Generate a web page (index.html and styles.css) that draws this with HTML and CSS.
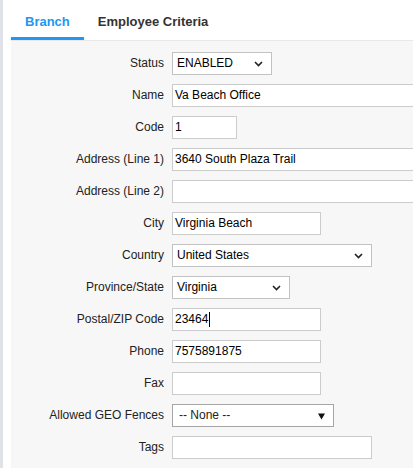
FILE: index.html
```html
<!DOCTYPE html>
<html lang="en">
<head>
<meta charset="utf-8">
<title>Branch</title>
<link rel="stylesheet" href="styles.css">
</head>
<body>
<div class="page">
  <div class="tabs">
    <div class="tab active">Branch</div>
    <div class="tab">Employee Criteria</div>
  </div>
  <div class="form">
    <div class="label">Status</div>
    <div class="control"><div class="select w100"><span>ENABLED</span><svg class="chev" width="9" height="6" viewBox="0 0 9 6"><polyline points="1,1 4.5,4.5 8,1" fill="none" stroke="#222" stroke-width="1.6"/></svg></div></div>

    <div class="label">Name</div>
    <div class="control"><div class="field wide">Va Beach Office</div></div>

    <div class="label">Code</div>
    <div class="control"><div class="field w65">1</div></div>

    <div class="label">Address (Line 1)</div>
    <div class="control"><div class="field wide">3640 South Plaza Trail</div></div>

    <div class="label">Address (Line 2)</div>
    <div class="control"><div class="field wide"></div></div>

    <div class="label">City</div>
    <div class="control"><div class="field w149">Virginia Beach</div></div>

    <div class="label">Country</div>
    <div class="control"><div class="select w200"><span>United States</span><svg class="chev" width="9" height="6" viewBox="0 0 9 6"><polyline points="1,1 4.5,4.5 8,1" fill="none" stroke="#222" stroke-width="1.6"/></svg></div></div>

    <div class="label">Province/State</div>
    <div class="control"><div class="select w118"><span>Virginia</span><svg class="chev" width="9" height="6" viewBox="0 0 9 6"><polyline points="1,1 4.5,4.5 8,1" fill="none" stroke="#222" stroke-width="1.6"/></svg></div></div>

    <div class="label">Postal/ZIP Code</div>
    <div class="control"><div class="field w149">23464<span class="caret"></span></div></div>

    <div class="label">Phone</div>
    <div class="control"><div class="field w149">7575891875</div></div>

    <div class="label">Fax</div>
    <div class="control"><div class="field w149"></div></div>

    <div class="label">Allowed GEO Fences</div>
    <div class="control"><div class="select geo"><span>-- None --</span><svg class="tri" width="7" height="7" viewBox="0 0 7 7"><polygon points="0,0.5 7,0.5 3.5,6.5" fill="#111"/></svg></div></div>

    <div class="label">Tags</div>
    <div class="control"><div class="field w200"></div></div>
  </div>
</div>
</body>
</html>
```

FILE: styles.css
```css
html, body {
  margin: 0;
  padding: 0;
  background: #ffffff;
}

body {
  font-family: "Liberation Sans", Arial, sans-serif;
  color: #222;
  overflow: hidden;
}

.page {
  border-left: 3px solid #dfe2e6;
  padding-left: 8px;
  min-height: 468px;
  box-sizing: border-box;
  display: flex;
  flex-direction: column;
}

.tabs {
  display: flex;
  height: 41px;
  box-sizing: border-box;
  border-bottom: 1px solid #e8e8e8;
}

.tab {
  height: 40px;
  box-sizing: border-box;
  padding: 14px 14px 0;
  font-size: 13px;
  line-height: 15px;
  font-weight: bold;
  color: #333;
  border-bottom: 3px solid transparent;
}

.tab.active {
  color: #2196f3;
  border-bottom-color: #2196f3;
}

.form {
  flex: 1;
  background: #f7f7f7;
  display: grid;
  grid-template-columns: 153px 1fr;
  grid-auto-rows: 23px;
  column-gap: 8px;
  row-gap: 9px;
  padding-top: 11px;
  align-content: start;
}

.label {
  text-align: right;
  font-size: 12px;
  line-height: 23px;
  color: #222;
  white-space: nowrap;
}

.control {
  display: flex;
  min-width: 0;
}

.field,
.select {
  height: 23px;
  box-sizing: border-box;
  border: 1px solid #cccccc;
  background: #ffffff;
  font-size: 12px;
  line-height: 21px;
  color: #000;
  flex-shrink: 0;
}

.field {
  padding: 0 2px;
  display: flex;
  align-items: center;
}

.select {
  display: flex;
  align-items: center;
  justify-content: space-between;
  padding: 0 8px 0 4px;
  border-color: #c2c2c2;
}

.chev {
  display: block;
  margin-top: 1px;
}

.select.geo {
  width: 162px;
  border-color: #a6a6a6;
  padding: 0 8px 0 6px;
  color: #222;
}

.tri {
  display: block;
  margin-top: 1px;
}

.wide { width: 260px; }
.w65 { width: 65px; }
.w100 { width: 100px; }
.w118 { width: 118px; }
.w149 { width: 149px; }
.w200 { width: 200px; }

.caret {
  display: inline-block;
  width: 1px;
  height: 15px;
  background: #000;
  margin-left: 1px;
}
```
